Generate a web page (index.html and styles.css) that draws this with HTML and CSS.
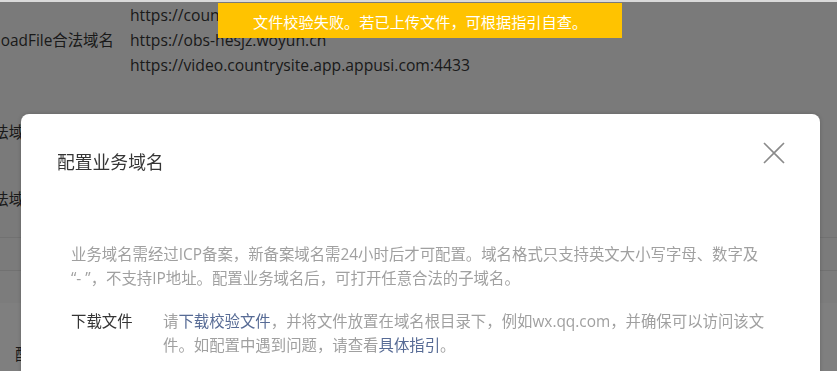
FILE: index.html
```html
<!DOCTYPE html>
<html lang="zh-CN">
<head>
<meta charset="utf-8">
<title>配置业务域名</title>
<link rel="stylesheet" href="styles.css">
</head>
<body>
<div class="page">
  <section class="domains">
    <div class="row">
      <div class="label">uploadFile合法域名</div>
      <ul class="urls">
        <li>https://countrysite.app.appusi.com</li>
        <li>https://obs-hesjz.woyun.cn</li>
        <li>https://video.countrysite.app.appusi.com:4433</li>
      </ul>
    </div>
    <div class="row">
      <div class="label">合法域名</div>
      <ul class="urls"><li>wss://countrysite.app.appusi.com</li></ul>
    </div>
    <div class="row">
      <div class="label">合法域名</div>
      <ul class="urls"><li>udp://countrysite.app.appusi.com</li></ul>
    </div>
  </section>
  <div class="table-head"></div>
  <div class="table-band"></div>
  <div class="footer-text">配置</div>
</div>

<div class="mask"></div>
<div class="topline"></div>

<div class="toast">文件校验失败。若已上传文件，可根据指引自查。</div>

<div class="dialog">
  <div class="dialog-hd">
    <h3 class="dialog-title">配置业务域名</h3>
    <button class="dialog-close" type="button" aria-label="关闭">
      <svg width="22" height="22" viewBox="0 0 22 22"><path d="M1 1 L21 21 M21 1 L1 21" stroke="#8a8a8a" stroke-width="1.6" fill="none"/></svg>
    </button>
  </div>
  <div class="dialog-bd">
    <p class="desc">业务域名需经过ICP备案，新备案域名需24小时后才可配置。域名格式只支持英文大小写字母、数字及<br>“- ”，不支持IP地址。配置业务域名后，可打开任意合法的子域名。</p>
    <div class="form-row">
      <div class="form-label">下载文件</div>
      <div class="form-content">请<a class="link" href="#">下载校验文件</a>，并将文件放置在域名根目录下，例如wx.qq.com，并确保可以访问该文<br>件。如配置中遇到问题，请查看<a class="link" href="#">具体指引</a>。</div>
    </div>
  </div>
</div>
</body>
</html>
```
FILE: styles.css
```css
* { box-sizing: border-box; margin: 0; padding: 0; }
html, body { height: 100%; overflow: hidden; }
body {
  font-family: "Open Sans", "Noto Sans CJK SC", sans-serif;
  font-size: 15.4px;
  color: #353535;
  background: #fff;
}
.page { margin-left: -22px; }
.domains {
  background: #f4f4f4;
  padding: 3px 0 25px;
  border-bottom: 1px solid #e2e2e2;
  display: flex;
  flex-direction: column;
  gap: 42px;
}
.row { display: flex; align-items: center; line-height: 25px; }
.label { width: 152px; flex: none; white-space: nowrap; }
.urls { list-style: none; white-space: nowrap; font-size: 15.7px; }
.table-head { height: 33px; background: #f6f6f6; border-bottom: 1px solid #e2e2e2; }
.table-band { height: 32px; background: #f8f8f8; }
.footer-text { margin-top: 40px; padding-left: 37px; line-height: 24px; }

.mask { position: fixed; inset: 0; background: rgba(0, 0, 0, .5); }
.topline { position: fixed; top: 0; left: 0; right: 0; height: 2px; background: #dadada; }

.toast {
  position: fixed;
  top: 3px;
  left: 218px;
  width: 404px;
  height: 35px;
  background: #ffc300;
  color: #fff;
  display: flex;
  align-items: center;
  justify-content: center;
  font-size: 15.2px;
}

.dialog {
  position: fixed;
  left: 21px;
  top: 114px;
  width: 799px;
  height: 320px;
  background: #fff;
  border-radius: 8px;
  box-shadow: 0 0 4px rgba(0, 0, 0, .18);
}
.dialog-hd {
  display: flex;
  justify-content: space-between;
  align-items: flex-start;
  padding: 28px 35px 0 36px;
}
.dialog-title { font-size: 17.8px; font-weight: normal; line-height: 26px; padding-top: 7px; color: #353535; }
.dialog-close { border: 0; background: none; width: 22px; height: 22px; display: block; }
.dialog-close svg { display: block; }
.dialog-bd { padding: 68px 50px 0; }
.desc { color: #a0a0a0; line-height: 24px; white-space: nowrap; }
.form-row { display: flex; margin-top: 19px; line-height: 24px; }
.form-label { width: 92px; flex: none; color: #353535; }
.form-content { color: #a0a0a0; white-space: nowrap; }
.link { color: #576b95; text-decoration: none; }
```
